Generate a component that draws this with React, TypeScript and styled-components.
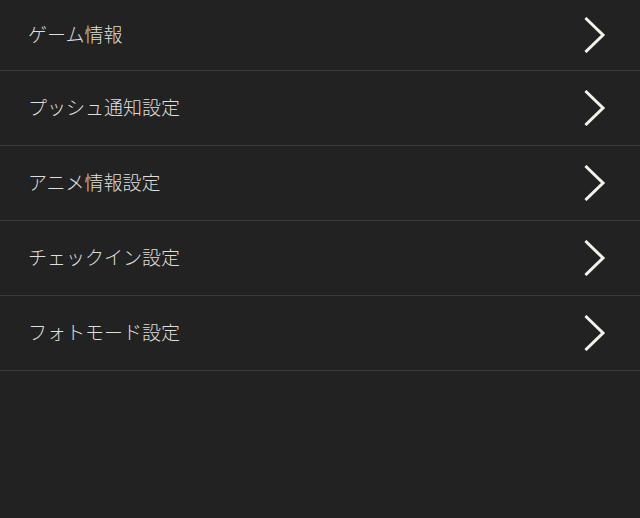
import React from "react";
import styled, { createGlobalStyle } from "styled-components";

const Global = createGlobalStyle`
  html, body { margin: 0; padding: 0; background: #222222; }
  body { width: 640px; height: 518px; overflow: hidden; }
`;

const Page = styled.div`
  width: 640px;
  height: 518px;
  background: #222222;
  font-family: "Noto Sans CJK JP", "Noto Sans", sans-serif;
`;

const List = styled.ul`
  list-style: none;
  margin: 0;
  padding: 0;
`;

const Row = styled.li<{ $first?: boolean }>`
  display: flex;
  align-items: center;
  justify-content: space-between;
  height: ${(p) => (p.$first ? "70px" : "74px")};
  padding: 0 34px 0 28px;
  border-bottom: 1px solid #3a3a3a;
`;

const Label = styled.span`
  color: #dededc;
  font-size: 19px;
  font-weight: 300;
  line-height: 1;
  padding-bottom: 3px;
`;

const Chevron = styled.svg`
  width: 22px;
  height: 36px;
  display: block;
`;

const items = [
  "ゲーム情報",
  "プッシュ通知設定",
  "アニメ情報設定",
  "チェックイン設定",
  "フォトモード設定",
];

export default function App() {
  return (
    <Page>
      <Global />
      <List>
        {items.map((t, i) => (
          <Row key={t} $first={i === 0}>
            <Label>{t}</Label>
            <Chevron viewBox="0 0 22 36">
              <path
                d="M2.5 2 L19 18 L2.5 34"
                fill="none"
                stroke="#f4f2e8"
                strokeWidth="3"
                strokeLinecap="square"
                strokeLinejoin="miter"
              />
            </Chevron>
          </Row>
        ))}
      </List>
    </Page>
  );
}
